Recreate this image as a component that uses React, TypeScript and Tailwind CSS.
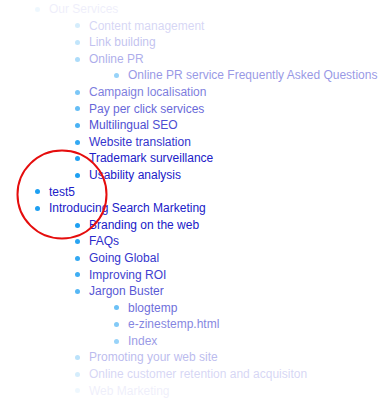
import React from "react";

type Item = { t: string; l: number; o: string };

const items: Item[] = [
  { t: "Our Services", l: 0, o: "opacity-[0.07]" },
  { t: "Content management", l: 1, o: "opacity-[0.18]" },
  { t: "Link building", l: 1, o: "opacity-[0.27]" },
  { t: "Online PR", l: 1, o: "opacity-[0.36]" },
  { t: "Online PR service Frequently Asked Questions", l: 2, o: "opacity-[0.46]" },
  { t: "Campaign localisation", l: 1, o: "opacity-[0.58]" },
  { t: "Pay per click services", l: 1, o: "opacity-[0.68]" },
  { t: "Multilingual SEO", l: 1, o: "opacity-[0.8]" },
  { t: "Website translation", l: 1, o: "opacity-[0.9]" },
  { t: "Trademark surveillance", l: 1, o: "opacity-100" },
  { t: "Usability analysis", l: 1, o: "opacity-100" },
  { t: "test5", l: 0, o: "opacity-100" },
  { t: "Introducing Search Marketing", l: 0, o: "opacity-100" },
  { t: "Branding on the web", l: 1, o: "opacity-100" },
  { t: "FAQs", l: 1, o: "opacity-95" },
  { t: "Going Global", l: 1, o: "opacity-90" },
  { t: "Improving ROI", l: 1, o: "opacity-[0.85]" },
  { t: "Jargon Buster", l: 1, o: "opacity-75" },
  { t: "blogtemp", l: 2, o: "opacity-[0.65]" },
  { t: "e-zinestemp.html", l: 2, o: "opacity-[0.55]" },
  { t: "Index", l: 2, o: "opacity-[0.45]" },
  { t: "Promoting your web site", l: 1, o: "opacity-30" },
  { t: "Online customer retention and acquisiton", l: 1, o: "opacity-[0.18]" },
  { t: "Web Marketing", l: 1, o: "opacity-[0.07]" },
];

const indent = ["pl-[35px]", "pl-[75px]", "pl-[114px]"];

export default function App() {
  return (
    <div
      className="relative w-[388px] h-[400px] bg-white overflow-hidden"
      style={{ fontFamily: '"Liberation Sans", Arial, sans-serif' }}
    >
      <ul className="pt-[1px]">
        {items.map((it, i) => (
          <li
            key={i}
            className={`flex items-center h-[16.6px] text-[12px] leading-[16.6px] whitespace-nowrap ${indent[it.l]} ${it.o}`}
          >
            <span className="inline-block w-[5px] h-[5px] rounded-full bg-[#1ea0f2] mr-[9px] shrink-0" />
            <span className="text-[#2020c8]">{it.t}</span>
          </li>
        ))}
      </ul>
      <svg
        className="absolute left-0 top-0 pointer-events-none"
        width="388"
        height="400"
        viewBox="0 0 388 400"
      >
        <ellipse cx="62" cy="194.5" rx="44.5" ry="44" fill="none" stroke="#e50d0d" strokeWidth="2" />
      </svg>
    </div>
  );
}
